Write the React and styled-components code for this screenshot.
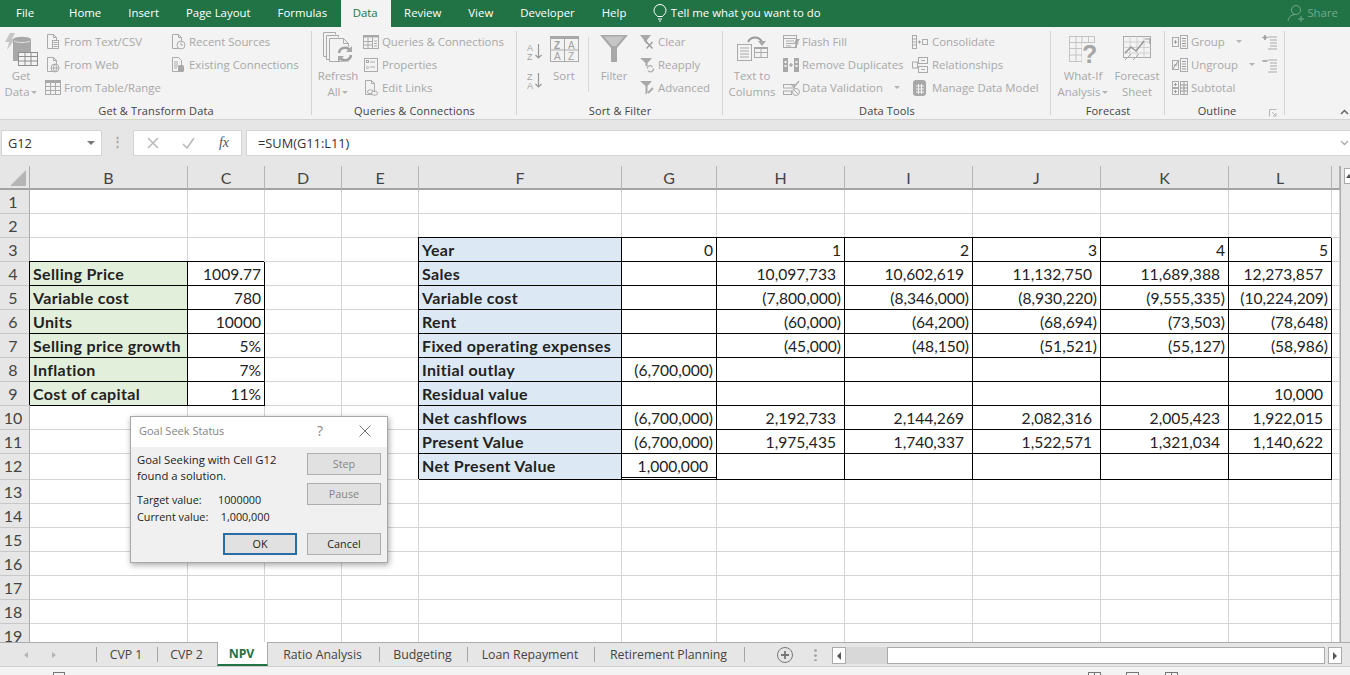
import React from 'react';
import styled, { createGlobalStyle } from 'styled-components';

const GlobalStyle = createGlobalStyle`
    html, body { margin: 0; padding: 0; background: #fff; }
    body { font-family: "Open Sans", "Liberation Sans", sans-serif; overflow: hidden; }
`;

const Page = styled.div`
    width: 1350px;
    height: 675px;
    overflow: hidden;
    display: flex;
    flex-direction: column;
    background: #e6e6e6;
`;

/* title tabs */
const TabStrip = styled.div`
    height: 27px;
    flex: none;
    display: flex;
    align-items: stretch;
    background: #217346;
    font-size: 11.4px;
    color: #fff;
`;
const MenuTab = styled.div`
    padding: 0 ${p => p.$pr ?? 13.5}px 0 ${p => p.$pl ?? 13.5}px;
    line-height: 25px;
    white-space: nowrap;
    background: ${p => p.$active ? '#f3f3f3' : 'transparent'};
    color: ${p => p.$active ? '#217346' : '#fff'};
`;
const TellMe = styled.div`
    display: flex;
    align-items: center;
    gap: 4px;
    margin-left: 13px;
    padding-bottom: 2px;
    white-space: nowrap;
    svg { stroke: #fff; fill: none; }
`;
const Share = styled.div`
    margin-left: auto;
    margin-right: 12px;
    display: flex;
    align-items: center;
    gap: 0;
    color: #74a98c;
    padding-bottom: 2px;
    svg { stroke: #74a98c; fill: none; }
`;

/* ribbon */
const Ribbon = styled.div`
    height: 92px;
    flex: none;
    display: flex;
    position: relative;
    background: #f3f3f3;
    border-bottom: 1px solid #d2d2d2;
    font-size: 11.4px;
    color: #a8a8a8;
`;
const Group = styled.div`
    width: ${p => p.$w}px;
    flex: none;
    padding-top: 4px;
    display: flex;
    flex-direction: column;
    position: relative;
`;
const GroupBody = styled.div`
    height: 72px;
    display: flex;
    padding-left: ${p => p.$pl || 0}px;
`;
const GroupLabel = styled.div`
    height: 16px;
    line-height: 16px;
    text-align: center;
    font-size: 11px;
    letter-spacing: 0.15px;
    color: #444;
    padding-right: ${p => p.$pr || 0}px;
`;
const GroupRule = styled.div`
    width: 1px;
    flex: none;
    height: 84px;
    margin: 4px 0 0 -1px;
    background: #d4d4d4;
`;
const Launcher = styled.svg`
    position: absolute;
    right: 8px;
    bottom: 2px;
    fill: none;
    stroke: #b8b8b8;
`;
const CollapseArrow = styled.svg`
    position: absolute;
    right: 1px;
    bottom: 4px;
    fill: none;
    stroke: #666;
    stroke-width: 1.5;
`;
const LargeBtn = styled.div`
    width: ${p => p.$w}px;
    margin-left: ${p => p.$ml || 0}px;
    flex: none;
    display: flex;
    flex-direction: column;
    align-items: center;
    text-align: center;
    line-height: 16px;
    white-space: nowrap;
`;
const LargeIcon = styled.div`
    height: 37px;
    display: flex;
    align-items: flex-start;
    justify-content: center;
    padding-top: ${p => p.$top ?? 2}px;
    box-sizing: border-box;
`;
const SmallCol = styled.div`
    display: flex;
    flex-direction: column;
    width: ${p => p.$w ? p.$w + 'px' : 'auto'};
    margin: -1px 0 0 ${p => p.$ml || 0}px;
    flex: none;
`;
const SmallBtn = styled.div`
    height: 23px;
    display: flex;
    align-items: center;
    gap: ${p => p.$gap ?? 3}px;
    white-space: nowrap;
`;
const SortStack = styled.div`
    height: ${p => p.$h}px;
    display: flex;
    align-items: flex-end;
`;
const Caret = styled.span`
    width: 0;
    height: 0;
    margin-left: ${p => p.$ml || 2}px;
    border-left: 3px solid transparent;
    border-right: 3px solid transparent;
    border-top: 3px solid #b4b4b4;
`;
const InlineCaret = styled(Caret)`
    display: inline-block;
    vertical-align: middle;
`;
const InnerRule = styled.div`
    width: 1px;
    height: 55px;
    margin: 6px 0 0 ${p => p.$ml}px;
    background: #d9d9d9;
    flex: none;
`;

const Ic = styled.svg`
    flex: none;
    display: block;
    fill: none;
    stroke: #ababab;
    stroke-width: 1;
    text { fill: #a2a2a2; stroke: none; font-family: "Liberation Sans", sans-serif; font-size: 9px; }
    .s { fill: #a8a8a8; stroke: none; }
    .l { fill: #c6c6c6; stroke: none; }
    .w { fill: #f3f3f3; }
`;
const Small = ({ children, w = 16, h = 16 }) => <Ic width={w} height={h} viewBox={`0 0 ${w} ${h}`}>{children}</Ic>;
const Doc = 'M2.5 .5h6l3 3v11h-9zM8.5 .5v3h3';

const FromTextIcon = () => <Small><path d={Doc} /><rect className="w" x="7.5" y="6.5" width="6" height="8" /><path d="M8.5 8.5h4M8.5 10.5h4M8.5 12.5h4" /></Small>;
const FromWebIcon = () => <Small><path d={Doc} /><circle className="w" cx="10" cy="11" r="4" /><path d="M6 11h8M10 7c-2 2-2 6 0 8M10 7c2 2 2 6 0 8" /></Small>;
const FromTableIcon = () => <Small><rect x=".5" y="1.5" width="15" height="13" /><path className="s" d="M0 0h16v3H0z" /><path d="M.5 6.5h15M.5 10.5h15M5.5 3v11M10.5 3v11" /></Small>;
const RecentIcon = () => <Small><path d={Doc} /><circle className="w" cx="11" cy="11" r="4" /><path d="M11 8.5V11h2" /></Small>;
const ExistingIcon = () => <Small><path d="M2.5 .5h6l3 3v11h-9z" /><path d="M4 5h4M4 7h4M4 9h4M4 11h3" /><rect className="s" x="8" y="8" width="6" height="7" rx="1.5" /></Small>;
const QueriesIcon = () => <Small><rect x=".5" y="1.5" width="15" height="13" /><path className="s" d="M0 1h16v2.5H0z" /><path d="M.5 7.5h9M.5 11h9M5 3.5v11M9.5 3.5v11M11 7h3M11 9.500h3M11 12h3" /></Small>;
const PropsIcon = () => <Small><rect x="1.5" y="1.5" width="13" height="13" /><path d="M7 5h5M7 10h5" /><rect x="3.5" y="3.5" width="2" height="2" /><circle cx="4.5" cy="10.5" r="1" /></Small>;
const LinksIcon = () => <Small><path d={Doc} /><rect className="w" x="4.5" y="10" width="6" height="3.6" rx="1.8" /><rect className="w" x="8.5" y="11.5" width="6" height="3.6" rx="1.8" /></Small>;
const ClearIcon = () => <Small><path className="s" d="M1 1h11L8 6v4L5 7V6z" /><path d="M7.5 8l6 6.5M13.5 8l-6 6.5" stroke="#999" strokeWidth="1.3" /></Small>;
const ReapplyIcon = () => <Small><path className="s" d="M1 1h12L8.5 6v3H6.5V6z" /><path d="M8 11.5a3 3 0 0 1 5.5-1.5M14.5 11.5a3 3 0 0 1-5.5 2" strokeWidth="1.3" /></Small>;
const AdvancedIcon = () => <Small><path className="s" d="M1 1h12L8.5 6v7l-2 1.5V6z" /><path d="M9 13l5-5" strokeWidth="2" /></Small>;
const FlashIcon = () => <Small w={17} h={16}><rect x=".5" y="1.5" width="13" height="12" /><path d="M.5 4.5h13M3 7h8M3 9.5h8M3 12h5" /><path className="s" d="M13 5h4l-2.500 3.500H16L11.500 15l1-5h-1.500z" /></Small>;
const DupesIcon = () => <Small><path className="s" d="M0 1h5v14H0z" /><path className="w" stroke="none" d="M1.500 4h2v2h-2zM1.500 8h2v2h-2z" /><path className="s" d="M11 1h5v14h-5z" /><path className="w" stroke="none" d="M12.500 4h2v2h-2zM12.500 8h2v2h-2z" /><path d="M6 8h4M8 6v4" stroke="#999" /></Small>;
const ValidIcon = () => <Small w={17} h={16}><rect x=".5" y="4.500" width="11" height="3.500" /><rect x=".5" y="11" width="8" height="3.500" /><path d="M8 4l3 3 5-6" strokeWidth="1.300" /><circle className="w" cx="13" cy="12" r="3.500" /><path d="M10.500 9.500l5 5" /></Small>;
const ConsolidateIcon = () => <Small><rect x=".5" y="1.500" width="4" height="13" /><path d="M.5 5h4M.5 8h4M.5 11h4" /><path d="M6 8h3M7.500 6.500v3" stroke="#999" /><rect x="10.500" y="5.500" width="5" height="5" /></Small>;
const RelationsIcon = () => <Small><rect x="6.500" y=".5" width="9" height="6" /><rect x="6.500" y="9.500" width="9" height="6" /><rect x=".5" y="5" width="5" height="6" /><path d="M9 3.500h4M9 12.500h4" /></Small>;
const ModelIcon = () => <Small w={16} h={18}><rect className="s" x="1" y="1" width="13" height="16" rx="3" /><path d="M4 7h8M4 10h8M4 13h8M6.500 5v10M9.500 5v10" stroke="#f3f3f3" /></Small>;
const GroupIcon = () => <Small><rect x=".5" y="3.500" width="6" height="9" /><rect x="8.500" y="1.500" width="7" height="13" /><path d="M1.800 8h3.500M3.500 6.200v3.500M10 4.500h4M10 7h4M10 9.500h4M10 12h4" stroke="#999" /></Small>;
const UngroupIcon = () => <Small><rect x=".5" y="3.500" width="6" height="9" /><rect x="8.500" y="1.500" width="7" height="13" /><path d="M1.800 8h3.500M.5 12.500l6-9M10 4.500h4M10 7h4M10 9.500h4M10 12h4" stroke="#999" /></Small>;
const SubtotalIcon = () => <Small><rect x=".5" y="1.500" width="6" height="6" /><rect x=".5" y="8.500" width="6" height="6" /><rect x="8.500" y="1.500" width="7" height="13" /><path d="M2 4.500h3M3.500 3v3M2 11.500h3M3.500 10v3M8.500 5h7M8.500 8h7M8.500 11h7M12 1.500v13" stroke="#999" /></Small>;
const ShowIcon = () => <Small><path d="M6 3h9M8 6h7M8 9h7M8 12h7M6 15h9" /><path d="M3 1v5M.5 3.500h5" stroke="#999" strokeWidth="1.500" /></Small>;
const HideIcon = () => <Small><path d="M6 3h9M8 6h7M8 9h7M8 12h7M6 15h9" /><path d="M.5 4h5" stroke="#999" strokeWidth="1.500" /></Small>;

const GetDataIcon = () => (
    <Ic width="33" height="33" viewBox="0 0 33 33">
        <path className="l" d="M5 0h5L7 6h3L2 17l2-8H0z" />
        <path className="s" d="M8 6c3-3 15-3 18 0v14H13v8H8z" />
        <path d="M9 8c3 2 13 2 16 0" stroke="#e4e4e4" />
        <rect className="w" x="13.500" y="19.500" width="19" height="13" stroke="#8e8e8e" />
        <path d="M13.500 23.500h19M13.500 28h19M20 20v12M26 20v12" stroke="#8e8e8e" />
    </Ic>
);
const RefreshIcon = () => (
    <Ic width="31" height="31" viewBox="0 0 31 31">
        <path d="M.5.500h12v2M3.500 3.500h12v2" />
        <path d="M.5.500v24h3M3.500 3.500v24h3" />
        <path className="w" d="M6.500 6.500h14l5 5v18h-19z" />
        <path d="M20.500 6.500v5h5" />
        <circle className="w" cx="22" cy="22" r="8" stroke="none" />
        <path d="M16 21a6 6 0 0 1 11-2.500M28 23a6 6 0 0 1-11 2.500" stroke="#a0a0a0" strokeWidth="2.500" />
        <path className="s" d="M29 14v6h-6zM15 30v-6h6z" />
    </Ic>
);
const SortAzIcon = () => (
    <Ic width="16" height="18" viewBox="0 0 16 18">
        <text x="0" y="8">A</text><text x="0" y="17">Z</text>
        <path d="M11.500 1v14M8.500 12l3 3 3-3" stroke="#999" strokeWidth="1.200" />
    </Ic>
);
const SortZaIcon = () => (
    <Ic width="16" height="18" viewBox="0 0 16 18">
        <text x="0" y="8">Z</text><text x="0" y="17">A</text>
        <path d="M11.500 1v14M8.500 12l3 3 3-3" stroke="#999" strokeWidth="1.200" />
    </Ic>
);
const SortIcon = () => (
    <Ic width="29" height="26" viewBox="0 0 29 26">
        <rect x=".5" y=".5" width="28" height="25" />
        <path className="s" d="M0 0h29v3H0z" />
        <path d="M14.500 3v22M.5 14h28" />
        <text x="4" y="12.500" fontWeight="bold" style={{ fontSize: 10 }}>Z</text>
        <text x="18" y="12.500" style={{ fontSize: 10 }}>A</text>
        <text x="4" y="24" style={{ fontSize: 10 }}>A</text>
        <text x="18" y="24" style={{ fontSize: 10 }}>Z</text>
    </Ic>
);
const FilterIcon = () => (
    <Ic width="28" height="28" viewBox="0 0 28 28">
        <path className="s" d="M0 0h28L17 13v14h-6V13z" />
        <path className="l" d="M4 1.500h20L16 11h-4z" />
    </Ic>
);
const ColumnsIcon = () => (
    <Ic width="31" height="26" viewBox="0 0 31 26">
        <rect x=".5" y="8.500" width="14" height="16" />
        <path d="M3 12h9M3 15h9M3 18h9M3 21h9" />
        <rect x="17.500" y="11.500" width="13" height="10" />
        <path className="s" d="M17 11h14v2H17z" />
        <path d="M17.500 16.500h13M24 13v8" />
        <path d="M11 6c3-6 11-6 14 0" stroke="#999" strokeWidth="1.800" />
        <path className="s" d="M21 5h8l-4 5z" />
    </Ic>
);
const WhatIfIcon = () => (
    <Ic width="28" height="33" viewBox="0 -2 28 33">
        <rect x=".5" y=".5" width="25" height="25" stroke="#c4c4c4" />
        <path d="M.5 6.500h25M.5 12.500h25M.5 19h25M7 .5v25M13 .5v25M19.500 .5v25" stroke="#c4c4c4" />
        <rect className="w" x="13" y="7" width="15" height="22" stroke="none" />
        <text x="13" y="27" fontWeight="bold" style={{ fontSize: 25, fill: '#a6a6a6' }}>?</text>
    </Ic>
);
const ForecastIcon = () => (
    <Ic width="29" height="26" viewBox="0 0 29 26">
        <rect x=".5" y=".5" width="27" height="21" />
        <path d="M.5 6h27M.5 11.500h27M.5 17h27M7 .5v21M14 .5v21M21 .5v21" stroke="#d0d0d0" />
        <path d="M2 17l6-6 5 4 8-10" stroke="#999" strokeWidth="1.600" />
        <path d="M22 3h5v5" stroke="#999" strokeWidth="1.200" />
        <path d="M2 24l6-6M10 24l6-6" />
    </Ic>
);

/* name box and formula */
const FormulaBar = styled.div`
    height: 46px;
    flex: none;
    box-sizing: border-box;
    padding: 10px 0 10px 1px;
    display: flex;
    align-items: stretch;
    background: #e6e6e6;
    font-size: 12.8px;
    color: #333;
`;
const NameBox = styled.div`
    width: 101px;
    flex: none;
    box-sizing: border-box;
    background: #fff;
    border: 1px solid #d4d4d4;
    padding: 0 6px;
    display: flex;
    align-items: center;
    justify-content: space-between;
`;
const DownCaret = styled.span`
    border-left: 4px solid transparent;
    border-right: 4px solid transparent;
    border-top: 4px solid #777;
`;
const Dots = styled.div`
    width: 31px;
    flex: none;
    text-align: center;
    line-height: 22px;
    color: #aaa;
    font-weight: bold;
`;
const FxBox = styled.div`
    width: 109px;
    flex: none;
    box-sizing: border-box;
    background: #fff;
    border: 1px solid #d4d4d4;
    display: flex;
    align-items: center;
    justify-content: space-between;
    padding: 0 12px 0 13px;
    margin-right: 4px;
    svg { fill: none; stroke: #bdbdbd; stroke-width: 1.700; }
`;
const FxLabel = styled.span`
    font-family: "Liberation Serif", serif;
    font-style: italic;
    font-size: 14px;
    color: #555;
`;
const FormulaInput = styled.div`
    flex: 1;
    background: #fff;
    border: 1px solid #d4d4d4;
    border-right: none;
    padding: 0 11px;
    line-height: 24px;
    position: relative;
`;
const Chevron = styled.svg`
    position: absolute;
    right: 1px;
    top: 9px;
    fill: none;
    stroke: #aaa;
    stroke-width: 1.300;
`;

/* sheet */
const SheetArea = styled.div`
    height: 476px;
    flex: none;
    position: relative;
    display: flex;
    background: #e6e6e6;
    overflow: hidden;
`;
const COL_WIDTHS = [30, 158, 77, 77, 77, 203, 95, 128, 128, 128, 128, 103, 8];
const Grid = styled.div`
    width: 1340px;
    flex: none;
    display: grid;
    grid-template-columns: ${COL_WIDTHS.map(w => w + 'px').join(' ')};
    grid-template-rows: 24px repeat(11, 24px) 26px repeat(7, 24px);
    background: #fff;
    border-right: 1px solid #ababab;
    font-family: Lato, sans-serif;
    font-size: 15.6px;
    color: #222;
`;
const Corner = styled.div`
    background: #e6e6e6;
    border-right: 1px solid #ababab;
    border-bottom: 2px solid #a3a3a3;
    box-sizing: border-box;
    padding: 4px 0 0 10px;
    svg { display: block; }
`;
const ColHead = styled.div`
    background: #e6e6e6;
    border-right: 1px solid #b5b5b5;
    border-bottom: 2px solid #a3a3a3;
    box-sizing: border-box;
    text-align: center;
    line-height: 23px;
    color: #444;
    font-size: 16px;
`;
const RowHead = styled.div`
    background: #e6e6e6;
    border-right: 1px solid #ababab;
    border-bottom: 1px solid #c8c8c8;
    box-sizing: border-box;
    text-align: center;
    line-height: 24px;
    color: #444;
    font-size: 16px;
    padding-right: 3px;
`;
const Cell = styled.div`
    box-sizing: border-box;
    border-right: 1px solid ${p => p.$boxed ? '#000' : '#d4d4d4'};
    border-bottom: ${p => p.$double ? '3px double #000' : `1px solid ${p.$boxed ? '#000' : '#d4d4d4'}`};
    box-shadow: ${p => p.$boxed ? '-1px -1px 0 #000' : 'none'};
    background: ${p => p.$fill || '#fff'};
    font-weight: ${p => p.$bold ? 700 : 400};
    font-size: ${p => p.$bold ? 16 : 15.6}px;
    letter-spacing: ${p => p.$bold ? 0.35 : 0}px;
    text-align: ${p => p.$bold ? 'left' : 'right'};
    padding: 0 ${p => p.$bold ? 0 : p.$acct ? 8 : 3}px 0 ${p => p.$bold ? 3 : 0}px;
    line-height: ${p => p.$bold ? 23 : 25}px;
    white-space: nowrap;
    overflow: hidden;
`;
const ScrollColumn = styled.div`
    flex: 1;
    padding: 2px 0 0 3px;
`;
const ScrollBtn = styled.div`
    width: 14px;
    height: 14px;
    background: #fff;
    border: 1px solid #ababab;
    display: flex;
    align-items: center;
    justify-content: center;
`;
const UpArrow = styled.span`
    border-left: 3px solid transparent;
    border-right: 3px solid transparent;
    border-bottom: 4px solid #555;
    margin-left: -6px;
`;

/* dialog */
const Dialog = styled.div`
    position: absolute;
    left: 130px;
    top: 250px;
    width: 258px;
    height: 147px;
    box-sizing: border-box;
    border: 1px solid #a8a8a8;
    box-shadow: 1px 2px 6px rgba(0,0,0,.35);
    background: #f0f0f0;
    font-size: 11.3px;
    color: #222;
    display: flex;
    flex-direction: column;
`;
const DialogTitle = styled.div`
    height: 30px;
    flex: none;
    box-sizing: border-box;
    background: #fff;
    display: flex;
    align-items: center;
    padding: 0 16px 3px 8px;
    color: #858585;
    font-size: 11px;
    span { flex: 1; }
    svg { stroke: #777; fill: none; }
`;
const Help = styled.b`
    font-weight: 400;
    font-size: 14px;
    margin-right: 36px;
    color: #888;
`;
const DialogBody = styled.div`
    display: flex;
    justify-content: space-between;
    padding: 5px 6px 0 6px;
`;
const DialogText = styled.div`
    line-height: 16px;
`;
const DialogValues = styled.div`
    margin-top: 7px;
    display: grid;
    grid-template-columns: 81px auto;
    font-size: 10.8px;
    line-height: 17px;
`;
const DialogSide = styled.div`
    display: flex;
    flex-direction: column;
    gap: 8px;
    padding-top: 1px;
`;
const DlgButton = styled.div`
    width: 74px;
    height: 22px;
    box-sizing: border-box;
    background: #e1e1e1;
    border: ${p => p.$primary ? '2px solid #2a6ea5' : '1px solid #adadad'};
    color: ${p => p.$disabled ? '#858585' : '#222'};
    text-align: center;
    font-size: 10.8px;
    line-height: ${p => p.$primary ? 18 : 20}px;
`;
const DialogFooter = styled.div`
    display: flex;
    justify-content: flex-end;
    gap: 10px;
    padding: 0 6px 7px;
    margin-top: auto;
`;

/* bottom */
const SheetBar = styled.div`
    height: 25px;
    flex: none;
    box-sizing: border-box;
    display: flex;
    align-items: stretch;
    background: #e6e6e6;
    border-top: 1px solid #ababab;
    border-bottom: 1px solid #cfcfcf;
    font-size: 12.3px;
    color: #444;
`;
const TabNav = styled.div`
    width: 96px;
    flex: none;
    display: flex;
    gap: 24px;
    align-items: center;
    padding-left: 24px;
    box-sizing: border-box;
`;
const NavArrow = styled.span`
    border-top: 3.500px solid transparent;
    border-bottom: 3.500px solid transparent;
    ${p => p.$left ? 'border-right' : 'border-left'}: 4px solid #b4b4b4;
`;
const SheetTab = styled.div`
    width: ${p => p.$w}px;
    flex: none;
    box-sizing: border-box;
    text-align: center;
    white-space: nowrap;
    line-height: 23px;
    margin-top: ${p => p.$active ? -1 : 0}px;
    padding-right: 2px;
    font-weight: ${p => p.$active ? 700 : 400};
    color: ${p => p.$active ? '#217346' : '#444'};
    background: ${p => p.$active ? '#fff' : 'transparent'};
    border-bottom: ${p => p.$active ? '2px solid #217346' : 'none'};
    border-left: 1px solid ${p => p.$active ? '#ababab' : 'transparent'};
    border-right: 1px solid ${p => p.$active ? '#ababab' : 'transparent'};
`;
const TabRule = styled.div`
    width: 1px;
    flex: none;
    margin: 4px 0;
    background: #a6a6a6;
`;
const AddSheet = styled.div`
    margin-left: 32px;
    flex: none;
    display: flex;
    align-items: center;
    svg { fill: none; stroke: #777; }
`;
const BarDots = styled.div`
    width: 3px;
    height: 13px;
    margin: 5px 15px 0 21px;
    flex: none;
    background: radial-gradient(circle, #aaa 1.300px, transparent 1.500px) 0 0 / 3px 5px;
`;
const HScroll = styled.div`
    width: 510px;
    flex: none;
    display: flex;
    align-items: stretch;
    margin: 4px 0 2px;
`;
const HButton = styled.div`
    width: 14px;
    flex: none;
    box-sizing: border-box;
    background: #fff;
    border: 1px solid #ababab;
    display: flex;
    align-items: center;
    justify-content: center;
    margin-left: ${p => p.$ml || 0}px;
`;
const HTrack = styled.div`
    width: 41px;
    flex: none;
    background: #d8d8d8;
`;
const HThumb = styled.div`
    flex: 1;
    background: #fff;
    border: 1px solid #ababab;
`;
const ScrollArrow = styled.span`
    border-top: 4px solid transparent;
    border-bottom: 4px solid transparent;
    ${p => p.$left ? 'border-right' : 'border-left'}: 4px solid #555;
`;
const StatusBar = styled.div`
    flex: 1;
    background: #f3f3f3;
    position: relative;
    display: flex;
    padding-top: 5px;
`;
const StatusMark = styled.div`
    width: ${p => p.$w}px;
    height: 12px;
    flex: none;
    margin-left: ${p => p.$ml}px;
    box-sizing: border-box;
    border: 1px solid #777;
    background: ${p => p.$split ? 'linear-gradient(90deg, transparent 45%, #777 45%, #777 55%, transparent 55%)' : 'transparent'};
`;

const COLS = ['B', 'C', 'D', 'E', 'F', 'G', 'H', 'I', 'J', 'K', 'L', ''];
const GREEN = '#e2efda';
const BLUE = '#dce9f5';

const inputs = [
    ['Selling Price', '1009.77'],
    ['Variable cost', '780'],
    ['Units', '10000'],
    ['Selling price growth', '5%'],
    ['Inflation', '7%'],
    ['Cost of capital', '11%'],
];
const npv = [
    ['Year', '0', '1', '2', '3', '4', '5'],
    ['Sales', '', '10,097,733', '10,602,619', '11,132,750', '11,689,388', '12,273,857'],
    ['Variable cost', '', '(7,800,000)', '(8,346,000)', '(8,930,220)', '(9,555,335)', '(10,224,209)'],
    ['Rent', '', '(60,000)', '(64,200)', '(68,694)', '(73,503)', '(78,648)'],
    ['Fixed operating expenses', '', '(45,000)', '(48,150)', '(51,521)', '(55,127)', '(58,986)'],
    ['Initial outlay', '(6,700,000)', '', '', '', '', ''],
    ['Residual value', '', '', '', '', '', '10,000'],
    ['Net cashflows', '(6,700,000)', '2,192,733', '2,144,269', '2,082,316', '2,005,423', '1,922,015'],
    ['Present Value', '(6,700,000)', '1,975,435', '1,740,337', '1,522,571', '1,321,034', '1,140,622'],
    ['Net Present Value', '1,000,000', '', '', '', '', ''],
];

const cellFor = (col, row) => {
    const c = COLS.indexOf(col);
    if (c <= 1 && row >= 4 && row <= 9) {
        const text = inputs[row - 4][c];
        return c === 0 ? { text, boxed: true, bold: true, fill: GREEN } : { text, boxed: true };
    }
    if (c >= 4 && c <= 10 && row >= 3 && row <= 12) {
        const text = npv[row - 3][c - 4];
        if (c === 4) return { text, boxed: true, bold: true, fill: BLUE };
        return {
            text,
            boxed: true,
            acct: /,\d{3}$/.test(text),
            double: col === 'G' && row === 12,
        };
    }
    return {};
};

const menuTabs = ['Insert', 'Page Layout', 'Formulas'];
const menuTabsAfter = ['Review', 'View', 'Developer', 'Help'];
const sheetTabs = [
    ['CVP 1', 60], ['CVP 2', 59, false, true], ['NPV', 51, true, true], ['Ratio Analysis', 111], ['Budgeting', 87], ['Loan Repayment', 126], ['Retirement Planning', 149],
];

const App = () => {
    const rows = Array.from({ length: 19 }, (_, i) => i + 1);
    return (
        <Page>
            <GlobalStyle />
            <TabStrip>
                <MenuTab $pl={16} $pr={21}>File</MenuTab>
                <MenuTab $pl={14}>Home</MenuTab>
                {menuTabs.map(t => <MenuTab key={t}>{t}</MenuTab>)}
                <MenuTab $active $pl={12} $pr={13}>Data</MenuTab>
                {menuTabsAfter.map(t => <MenuTab key={t}>{t}</MenuTab>)}
                <TellMe>
                    <svg width="14" height="18" viewBox="0 0 14 18"><path d="M4.500 12.500C3 10.500 1 9.500 1 6.500a6 6 0 0 1 12 0c0 3-2 4-3.500 6zM5 15h4M6 17h2" /></svg>
                    Tell me what you want to do
                </TellMe>
                <Share>
                    <svg width="20" height="18" viewBox="0 0 20 18"><circle cx="9" cy="6" r="4.500" /><path d="M1 17c1-5 4-6.500 8-6.500M14 12v6M11 15h6" /></svg>
                    Share
                </Share>
            </TabStrip>

            <Ribbon>
                <Group $w={312}>
                    <GroupBody>
                        <LargeBtn $w={42}>
                            <LargeIcon $top={2}><GetDataIcon /></LargeIcon>
                            Get
                            <span>Data<InlineCaret /></span>
                        </LargeBtn>
                        <SmallCol $w={125} $ml={3}>
                            <SmallBtn><FromTextIcon />From Text/CSV</SmallBtn>
                            <SmallBtn><FromWebIcon />From Web</SmallBtn>
                            <SmallBtn><FromTableIcon />From Table/Range</SmallBtn>
                        </SmallCol>
                        <SmallCol>
                            <SmallBtn><RecentIcon />Recent Sources</SmallBtn>
                            <SmallBtn><ExistingIcon />Existing Connections</SmallBtn>
                        </SmallCol>
                    </GroupBody>
                    <GroupLabel>Get &amp; Transform Data</GroupLabel>
                </Group>
                <GroupRule />
                <Group $w={205}>
                    <GroupBody>
                        <LargeBtn $w={42} $ml={5}>
                            <LargeIcon $top={1}><RefreshIcon /></LargeIcon>
                            Refresh
                            <span>All<InlineCaret /></span>
                        </LargeBtn>
                        <SmallCol $ml={4}>
                            <SmallBtn><QueriesIcon />Queries &amp; Connections</SmallBtn>
                            <SmallBtn><PropsIcon />Properties</SmallBtn>
                            <SmallBtn><LinksIcon />Edit Links</SmallBtn>
                        </SmallCol>
                    </GroupBody>
                    <GroupLabel>Queries &amp; Connections</GroupLabel>
                </Group>
                <GroupRule />
                <Group $w={206}>
                    <GroupBody>
                        <SmallCol $ml={10} $w={20}>
                            <SortStack $h={31}><SortAzIcon /></SortStack>
                            <SortStack $h={29}><SortZaIcon /></SortStack>
                        </SmallCol>
                        <LargeBtn $w={34}>
                            <LargeIcon $top={5}><SortIcon /></LargeIcon>
                            Sort
                        </LargeBtn>
                        <InnerRule $ml={7} />
                        <LargeBtn $w={46} $ml={2}>
                            <LargeIcon $top={4}><FilterIcon /></LargeIcon>
                            Filter
                        </LargeBtn>
                        <SmallCol $ml={2}>
                            <SmallBtn><ClearIcon />Clear</SmallBtn>
                            <SmallBtn><ReapplyIcon />Reapply</SmallBtn>
                            <SmallBtn><AdvancedIcon />Advanced</SmallBtn>
                        </SmallCol>
                    </GroupBody>
                    <GroupLabel>Sort &amp; Filter</GroupLabel>
                </Group>
                <GroupRule />
                <Group $w={328}>
                    <GroupBody>
                        <LargeBtn $w={58}>
                            <LargeIcon $top={5}><ColumnsIcon /></LargeIcon>
                            Text to
                            <span>Columns</span>
                        </LargeBtn>
                        <SmallCol $w={129} $ml={2}>
                            <SmallBtn $gap={2}><FlashIcon />Flash Fill</SmallBtn>
                            <SmallBtn><DupesIcon />Remove Duplicates</SmallBtn>
                            <SmallBtn $gap={2}><ValidIcon />Data Validation<Caret $ml={9} /></SmallBtn>
                        </SmallCol>
                        <SmallCol>
                            <SmallBtn $gap={4}><ConsolidateIcon />Consolidate</SmallBtn>
                            <SmallBtn $gap={4}><RelationsIcon />Relationships</SmallBtn>
                            <SmallBtn $gap={4}><ModelIcon />Manage Data Model</SmallBtn>
                        </SmallCol>
                    </GroupBody>
                    <GroupLabel>Data Tools</GroupLabel>
                </Group>
                <GroupRule />
                <Group $w={114}>
                    <GroupBody $pl={6}>
                        <LargeBtn $w={52}>
                            <LargeIcon $top={3}><WhatIfIcon /></LargeIcon>
                            What-If
                            <span>Analysis<InlineCaret /></span>
                        </LargeBtn>
                        <LargeBtn $w={50} $ml={3}>
                            <LargeIcon $top={5}><ForecastIcon /></LargeIcon>
                            Forecast
                            <span>Sheet</span>
                        </LargeBtn>
                    </GroupBody>
                    <GroupLabel>Forecast</GroupLabel>
                </Group>
                <GroupRule />
                <Group $w={120}>
                    <GroupBody $pl={7}>
                        <SmallCol $w={90}>
                            <SmallBtn><GroupIcon />Group<Caret $ml={8} /></SmallBtn>
                            <SmallBtn><UngroupIcon />Ungroup<Caret $ml={8} /></SmallBtn>
                            <SmallBtn><SubtotalIcon />Subtotal</SmallBtn>
                        </SmallCol>
                        <SmallCol>
                            <SmallBtn><ShowIcon /></SmallBtn>
                            <SmallBtn><HideIcon /></SmallBtn>
                        </SmallCol>
                    </GroupBody>
                    <GroupLabel $pr={16}>Outline</GroupLabel>
                    <Launcher width="8" height="8" viewBox="0 0 8 8"><path d="M.5 7.500v-7h7M3 3l4 4M4 7h3V4" /></Launcher>
                </Group>
                <GroupRule />
                <CollapseArrow width="9" height="6" viewBox="0 0 9 6"><path d="M1 5l3.500-3.500L8 5" /></CollapseArrow>
            </Ribbon>

            <FormulaBar>
                <NameBox>G12<DownCaret /></NameBox>
                <Dots>⋮</Dots>
                <FxBox>
                    <svg width="12" height="12" viewBox="0 0 12 12"><path d="M1 1l10 10M11 1L1 11" /></svg>
                    <svg width="13" height="12" viewBox="0 0 13 12"><path d="M1 7l4 4 7-10" /></svg>
                    <FxLabel>fx</FxLabel>
                </FxBox>
                <FormulaInput>
                    =SUM(G11:L11)
                    <Chevron width="9" height="6" viewBox="0 0 9 6"><path d="M1 1l3.500 3.500L8 1" /></Chevron>
                </FormulaInput>
            </FormulaBar>

            <SheetArea>
                <Grid>
                    <Corner>
                        <svg width="16" height="16" viewBox="0 0 16 16"><path d="M16 0v16H0z" fill="#b5b5b5" /></svg>
                    </Corner>
                    {COLS.map((c, i) => <ColHead key={i}>{c}</ColHead>)}
                    {rows.map(r => (
                        <React.Fragment key={r}>
                            <RowHead>{r}</RowHead>
                            {COLS.map(c => {
                                const d = cellFor(c, r);
                                return (
                                    <Cell
                                        key={c}
                                        $boxed={d.boxed}
                                        $bold={d.bold}
                                        $fill={d.fill}
                                        $acct={d.acct}
                                        $double={d.double}
                                    >
                                        {d.text}
                                    </Cell>
                                );
                            })}
                        </React.Fragment>
                    ))}
                </Grid>
                <ScrollColumn>
                    <ScrollBtn><UpArrow /></ScrollBtn>
                </ScrollColumn>
                <Dialog>
                    <DialogTitle>
                        <span>Goal Seek Status</span>
                        <Help>?</Help>
                        <svg width="12" height="12" viewBox="0 0 12 12"><path d="M.5.500l11 11M11.500 .5l-11 11" /></svg>
                    </DialogTitle>
                    <DialogBody>
                        <DialogText>
                            Goal Seeking with Cell G12<br />
                            found a solution.
                            <DialogValues>
                                <span>Target value:</span><span>1000000</span>
                                <span>Current value:</span><span>&nbsp;1,000,000</span>
                            </DialogValues>
                        </DialogText>
                        <DialogSide>
                            <DlgButton $disabled>Step</DlgButton>
                            <DlgButton $disabled>Pause</DlgButton>
                        </DialogSide>
                    </DialogBody>
                    <DialogFooter>
                        <DlgButton $primary>OK</DlgButton>
                        <DlgButton>Cancel</DlgButton>
                    </DialogFooter>
                </Dialog>
            </SheetArea>

            <SheetBar>
                <TabNav><NavArrow $left /><NavArrow /></TabNav>
                <TabRule />
                {sheetTabs.map(([name, w, active, noRule]) => (
                    <React.Fragment key={name}>
                        <SheetTab $w={w} $active={active}>{name}</SheetTab>
                        {!noRule && <TabRule />}
                    </React.Fragment>
                ))}
                <AddSheet>
                    <svg width="16" height="16" viewBox="0 0 16 16"><circle cx="8" cy="8" r="7.500" /><path d="M8 4v8M4 8h8" strokeWidth="1.800" /></svg>
                </AddSheet>
                <BarDots />
                <HScroll>
                    <HButton><ScrollArrow $left /></HButton>
                    <HTrack />
                    <HThumb />
                    <HButton $ml={3}><ScrollArrow /></HButton>
                </HScroll>
            </SheetBar>
            <StatusBar>
                <StatusMark $w={12} $ml={53} />
                <StatusMark $w={13} $ml={1023} $split />
                <StatusMark $w={13} $ml={25} />
                <StatusMark $w={13} $ml={26} $split />
            </StatusBar>
        </Page>
    );
};

export default App;
